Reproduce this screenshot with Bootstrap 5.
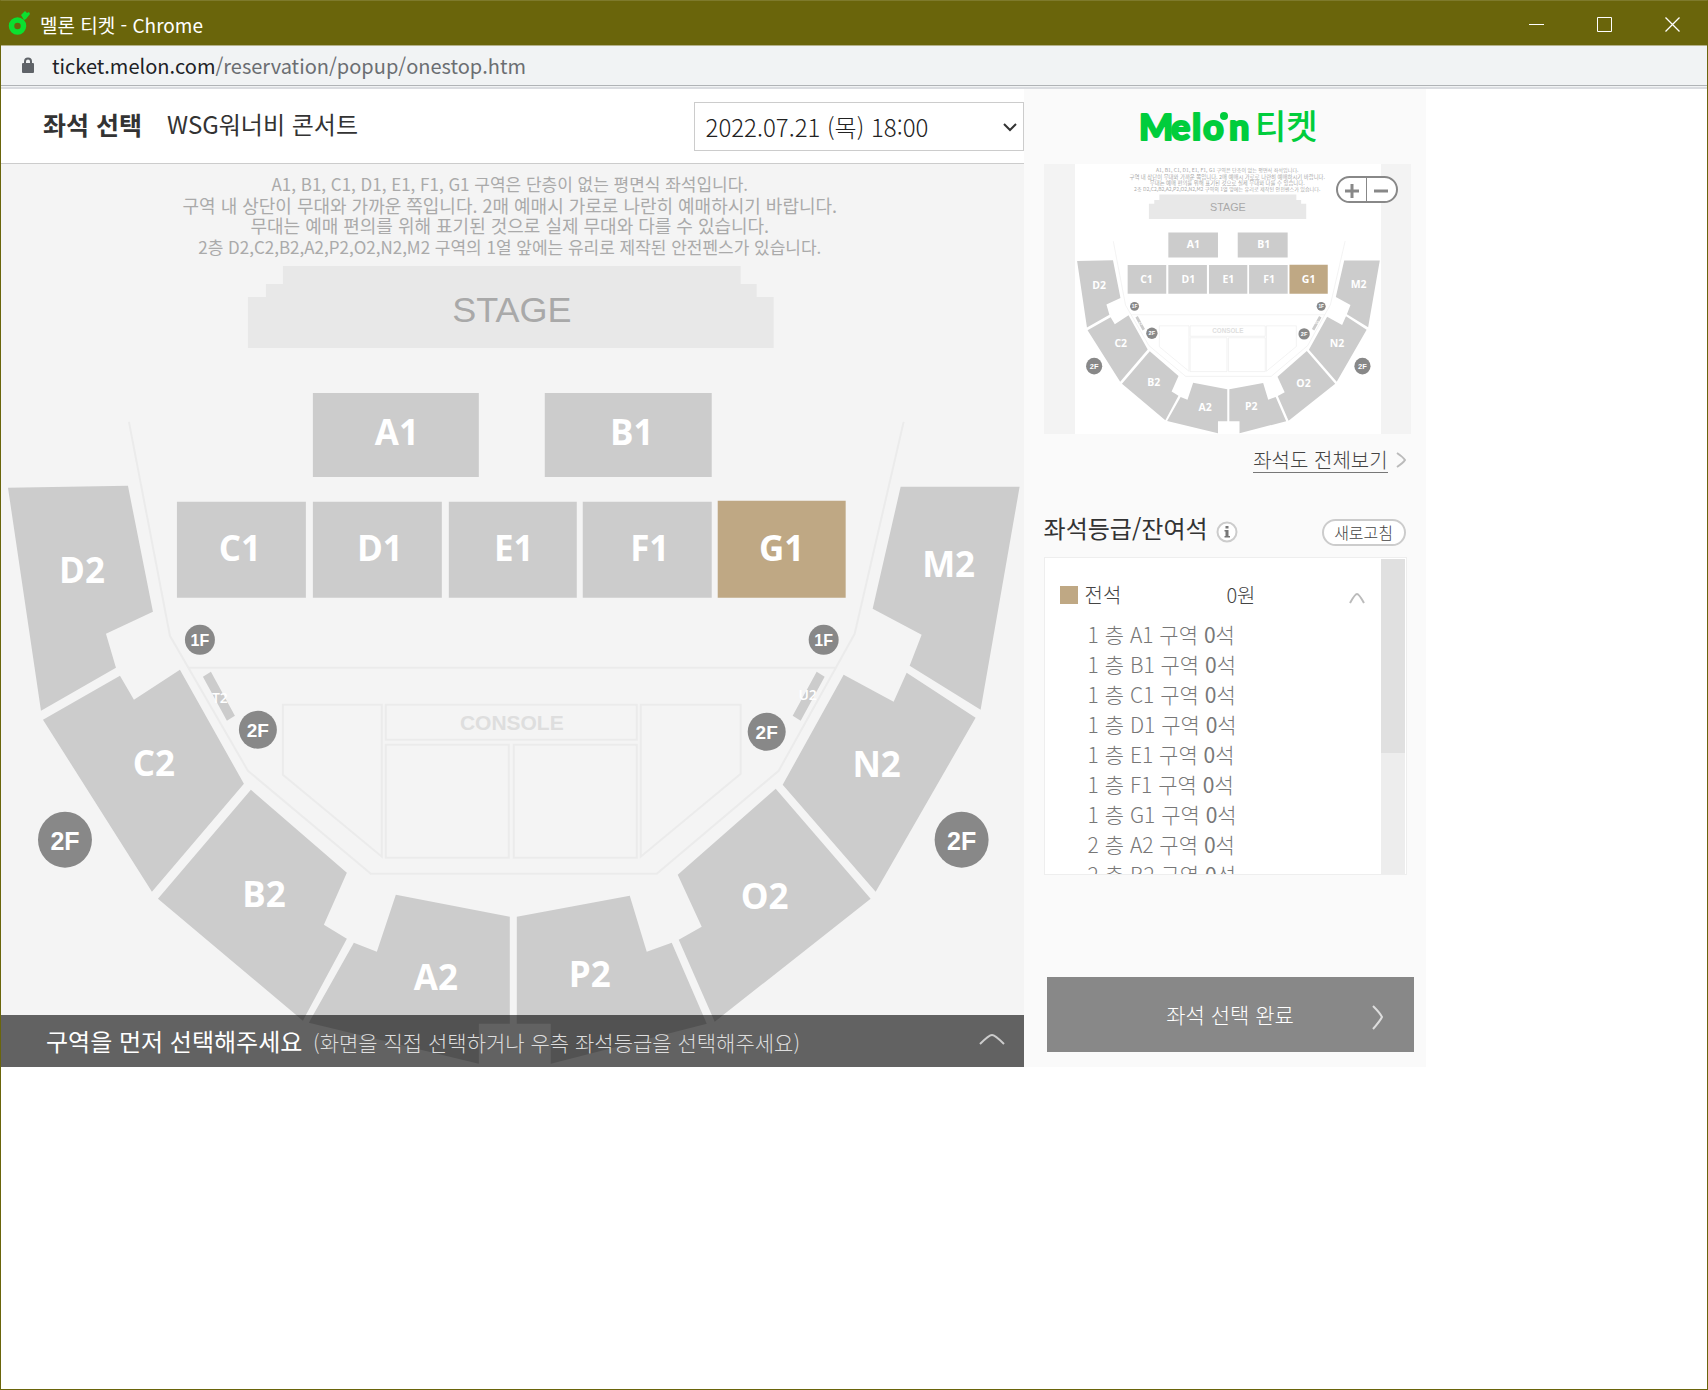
<!DOCTYPE html>
<html lang="ko">
<head>
<meta charset="utf-8">
<meta name="viewport" content="width=device-width, initial-scale=1">
<title>멜론 티켓</title>
<link href="https://cdn.jsdelivr.net/npm/bootstrap@5.3.0/dist/css/bootstrap.min.css" rel="stylesheet">
<style>
  body { font-family: "Noto Sans CJK KR", sans-serif; color: #333; background: #fff; }
  .win { min-height: 100vh; border: 1px solid #6a650b; border-top-color: #7e7a2c; }
  .titlebar { height: 44px; background: #6a650b; color: #fff; font-size: 19px; padding-left: 7px; }
  .win-btn { width: 68px; height: 44px; padding: 0 0 2px; border: 0; background: none; color: #fff; }
  .addressbar { height: 44px; background: #f1f3f4; border-top: 1px solid #b5b28a; padding-left: 20px; font-size: 20px; color: #6b6e72;
    box-shadow: inset 0 -2px #dadce0, inset 0 -3px #f1f3f4, inset 0 -4px #b0b3b6; padding-bottom: 4px; }
  .host { color: #202124; margin-left: 17px; }
  .seatcol { flex: 0 0 calc(60% - 1px); }
  .sidecol { flex: 0 0 402px; background: #fafafa; padding: 18px 11px 15px 20px; }
  .pagehead { height: 75px; border-bottom: 1px solid #ccc; padding-left: 42px; font-size: 24px; }
  .pagehead h1 { font-size: 25px; }
  .show-title { margin-left: 25px; }
  .show-select { width: 330px; height: 49px; border: 1px solid #ccc; border-radius: 0; font-size: 24px; font-weight: 300; padding: 0 30px 0 11px; color: #222;
    appearance: none; background: #fff; display: block; margin-top: 1px; }
  .select-arrow { right: 7px; top: 20px; pointer-events: none; }
  .map-area { background: #f4f4f4; }
  .map-area svg, .thumb svg { display: block; width: 100%; height: auto; }
  .zone { fill: #ccc; }
  .zone-on { fill: #bfa884; }
  .guide { fill: none; stroke: #ebebeb; stroke-width: 2; }
  .notice { font-size: 17px; fill: #aaa; text-anchor: middle; }
  .notice-wide { font-size: 18px; }
  .zone-name { font: 700 35px "Open Sans", sans-serif; fill: #fff; text-anchor: middle; }
  .stand-name { font: 600 14px "Open Sans", sans-serif; fill: #fff; text-anchor: middle; }
  .floor { fill: #888; }
  .floor-name { font: 700 25px "Liberation Sans", sans-serif; fill: #fff; text-anchor: middle; }
  .floor-md { font-size: 19px; }
  .floor-sm { font-size: 16px; }
  .guidebar { height: 52px; background: rgba(0,0,0,.6); color: #fff; font-size: 24px; padding: 0 18px 0 45px; }
  .guidebar .hint { font-size: 21px; font-weight: 300; color: #ddd; }
  .plain-btn { border: 0; background: none; padding: 0; line-height: 1; display: block; }
  .logo { overflow: visible; }
  .thumbbox { background: #f3f3f3; width: 367px; margin-top: 17px; padding-left: 31px; }
  .thumb { width: 306px; background: #fff; }
  .zoomer { top: 12px; right: 13px; width: 62px; height: 27px; border: 2px solid #888; border-radius: 14px; background: #fff; }
  .zoomer .plain-btn { flex: 1; }
  .zoomer .plain-btn + .plain-btn { border-left: 1px solid #888; }
  .wholeview { font-size: 20px; font-weight: 300; color: #444; text-decoration: none; border-bottom: 1px solid #777; line-height: 24px; }
  .wholerow { margin: 13px 9px 0 0; height: 26px; }
  .graderow { margin-top: 38px; width: 362px; height: 34px; }
  .graderow h2 { font-size: 24px; font-weight: 400; }
  .refresh { border: 2px solid #ccc; border-radius: 14px; background: #fff; width: 84px; height: 27px; font-size: 16px; font-weight: 300; padding: 0; line-height: 20px; color: #444; }
  .gradebox { width: 363px; height: 318px; margin-top: 12px; border: 1px solid #eee; background: #fff; padding: 1px 1px 0 15px; }
  .gradehead { padding-top: 12px; font-size: 20px; font-weight: 300; line-height: 30px; color: #444; height: 60px; }
  .swatch { width: 18px; height: 18px; background: #bfa884; margin-right: 7px; }
  .price { margin-left: 105px; }
  .zones { padding-left: 28px; font-size: 21px; font-weight: 300; line-height: 30px; color: #777; }
  .track { width: 24px; background: #ededed; }
  .track-thumb { height: 194px; background: #e0e0e0; }
  .done { margin: 102px 0 0 3px; width: 367px; height: 75px; border: 0; background: #888; color: #fff; font-size: 21px; font-weight: 300; }
  .done svg { right: 30px; top: 28px; }
</style>
</head>
<body>
<div class="win">
  <header class="titlebar d-flex align-items-center">
    <svg width="24" height="30" viewBox="0 0 24 30" aria-hidden="true"><circle cx="9.500" cy="18" r="6" fill="none" stroke="#0be02f" stroke-width="5.500"/><path d="M13 7l3-3 1-1 2 2 2-1 1 2-4 5-2 1z" fill="#0be02f"/></svg>
    <span class="ms-2 pt-1">멜론 티켓 - Chrome</span>
    <div class="ms-auto d-flex">
      <button class="win-btn" aria-label="최소화"><svg width="16" height="16"><path d="M0 7.500h15" stroke="#fff"/></svg></button>
      <button class="win-btn" aria-label="최대화"><svg width="16" height="16"><path d="M.5.5h14v14H.5z" fill="none" stroke="#fff"/></svg></button>
      <button class="win-btn" aria-label="닫기"><svg width="16" height="16"><path d="M.5.5l14 14M14.500.5l-14 14" stroke="#fff" stroke-width="1.300"/></svg></button>
    </div>
  </header>
  <div class="addressbar d-flex align-items-center">
    <svg width="14" height="17" viewBox="0 0 14 17" aria-hidden="true"><rect x="1" y="6" width="12" height="10" rx="1" fill="#5f6368"/><path d="M4 7V4.500a3 3 0 0 1 6 0V7" fill="none" stroke="#5f6368" stroke-width="2"/></svg>
    <span><span class="host">ticket.melon.com</span>/reservation/popup/onestop.htm</span>
  </div>

  <div class="d-flex align-items-stretch">
    <main class="seatcol">
      <div class="pagehead d-flex align-items-center">
        <h1 class="fw-bold mb-0 pb-1">좌석 선택</h1>
        <span class="show-title pb-1">WSG워너비 콘서트</span>
        <div class="position-relative ms-auto">
          <label for="show" class="visually-hidden">날짜</label>
          <select id="show" class="show-select"><option>2022.07.21 (목) 18:00</option></select>
          <svg class="select-arrow position-absolute" width="14" height="12" aria-hidden="true"><path d="M1 3l6 6 6-6" fill="none" stroke="#333" stroke-width="2"/></svg>
        </div>
      </div>

      <div class="map-area position-relative">
        <svg viewBox="1 164 1023 903" role="img" aria-label="좌석 배치도">
          <g id="hall">
            <g class="notice">
              <text x="510" y="191">A1, B1, C1, D1, E1, F1, G1 구역은 단층이 없는 평면식 좌석입니다.</text>
              <text class="notice-wide" x="510" y="213">구역 내 상단이 무대와 가까운 쪽입니다. 2매 예매시 가로로 나란히 예매하시기 바랍니다.</text>
              <text class="notice-wide" x="510" y="233">무대는 예매 편의를 위해 표기된 것으로 실제 무대와 다를 수 있습니다.</text>
              <text x="510" y="254">2층 D2,C2,B2,A2,P2,O2,N2,M2 구역의 1열 앞에는 유리로 제작된 안전펜스가 있습니다.</text>
            </g>
            <path d="M283 266H741V284H757V297H774V348H248V297H266V284H283Z" fill="#e8e8e8"/>
            <text x="512" y="322" font-family="Liberation Sans, sans-serif" font-size="36" fill="#a9a9a9" text-anchor="middle">STAGE</text>
            <g class="guide">
              <path d="M129 422L170 636L248 771L371 874H657L779 771L855 634L904 422M188 668H836"/>
              <path d="M283 705H382V857L283 775ZM386 705H637V740H386ZM386 745H509V858H386ZM514 745H637V858H514ZM641 705H741V774L641 857Z"/>
            </g>
            <text x="512" y="730" font-family="Liberation Sans, sans-serif" font-weight="700" font-size="21" fill="#dedede" text-anchor="middle">CONSOLE</text>
            <g class="zone">
              <path d="M313 393H479V477H313Z"/><path d="M545 393H712V477H545Z"/>
              <path d="M177 502H306V598H177Z"/><path d="M313 502H442V598H313Z"/><path d="M449 502H577V598H449Z"/><path d="M583 502H712V598H583Z"/>
              <path class="zone-on" d="M718 501H846V598H718Z"/>
              <path d="M8 488L128 486L153 612L106 634L116 668L41 711Z"/>
              <path d="M43 720L120 676L134 700L180 670L244 784L152 892Z"/>
              <path d="M251 790L347 873L324 925L347 939L303 1021L158 899Z"/>
              <path d="M354 943L377 952L396 895L510 917V1024H479V1064L309 1023Z"/>
              <path d="M517 917L630 896L647 952L672 943L707 1024L551 1064V1024H517Z"/>
              <path d="M776 789L871 899L715 1022L679 940L702 927L678 875Z"/>
              <path d="M844 675L894 702L907 673L976 718L876 892L783 785Z"/>
              <path d="M901 487H1020L981 710L910 666L922 635L873 609Z"/>
              <path d="M203 677L211 672L235 716L227 721ZM817 672L825 677L801 721L793 716Z"/>
            </g>
            <g class="zone-name">
              <text x="397" y="445">A1</text><text x="632" y="445">B1</text>
              <text x="240" y="561">C1</text><text x="380" y="561">D1</text><text x="514" y="561">E1</text><text x="650" y="561">F1</text><text x="782" y="561">G1</text>
              <text x="82" y="583">D2</text><text x="154" y="776">C2</text><text x="264" y="907">B2</text><text x="436" y="990">A2</text>
              <text x="590" y="987">P2</text><text x="765" y="909">O2</text><text x="877" y="777">N2</text><text x="949" y="577">M2</text>
            </g>
            <g class="stand-name"><text x="220" y="703">T2</text><text x="808" y="700">U2</text></g>
            <g class="floor">
              <circle cx="200" cy="640" r="15"/><circle cx="824" cy="640" r="15"/>
              <circle cx="258" cy="730" r="19"/><circle cx="767" cy="732" r="19"/>
              <ellipse cx="65" cy="840" rx="27" ry="28"/><ellipse cx="962" cy="840" rx="27" ry="28"/>
            </g>
            <g class="floor-name">
              <text class="floor-sm" x="200" y="646">1F</text><text class="floor-sm" x="824" y="646">1F</text>
              <text class="floor-md" x="258" y="737">2F</text><text class="floor-md" x="767" y="739">2F</text>
              <text x="65" y="850">2F</text><text x="962" y="850">2F</text>
            </g>
          </g>
        </svg>
        <div class="guidebar position-absolute bottom-0 start-0 end-0 d-flex align-items-center">
          <span>구역을 먼저 선택해주세요 <span class="hint ms-1">(화면을 직접 선택하거나 우측 좌석등급을 선택해주세요)</span></span>
          <button class="plain-btn ms-auto pb-1" aria-label="펼치기"><svg width="28" height="14"><path d="M2 12C7 7 11 3 14 3s7 4 12 9" fill="none" stroke="#ccc" stroke-width="2"/></svg></button>
        </div>
      </div>
    </main>

    <aside class="sidecol">
      <a href="#" class="d-flex justify-content-center" aria-label="Melon 티켓"><svg class="logo" width="180" height="40" viewBox="0 0 180 40" fill="#00cd3c">
        <text x="0 32 53 64 90" y="33" font-family="Lato, sans-serif" font-weight="900" font-size="36" stroke="#00cd3c" stroke-width="2" stroke-linejoin="round">Melon</text>
        <circle cx="85" cy="9" r="4"/>
        <text x="116" y="32" font-size="34" font-weight="500">티켓</text>
      </svg></a>
      <div class="thumbbox position-relative">
        <div class="thumb"><svg viewBox="1 164 1023 903" aria-hidden="true"><use href="#hall"/></svg></div>
        <div class="zoomer position-absolute d-flex align-items-stretch">
          <button class="plain-btn" aria-label="확대"><svg width="16" height="16"><path d="M1 8h14M8 1v14" stroke="#888" stroke-width="3"/></svg></button>
          <button class="plain-btn" aria-label="축소"><svg width="16" height="16"><path d="M1 8h14" stroke="#888" stroke-width="3"/></svg></button>
        </div>
      </div>
      <div class="wholerow d-flex justify-content-end align-items-center">
        <a href="#" class="wholeview">좌석도 전체보기</a>
        <svg class="ms-2" width="10" height="16" aria-hidden="true"><path d="M1 1q6 4 8 7q-2 3-8 7" fill="none" stroke="#bbb" stroke-width="2"/></svg>
      </div>
      <div class="graderow d-flex align-items-center">
        <h2 class="mb-0">좌석등급/잔여석</h2>
        <button class="plain-btn ms-2 pt-2" aria-label="안내"><svg width="22" height="22"><circle cx="11" cy="11" r="9.500" fill="#fff" stroke="#ccc" stroke-width="2"/><path d="M9.500 5h3v2.500h-3zM8.500 9h4v6H14v1.500H8.500V15h1v-4.500h-1z" fill="#777"/></svg></button>
        <button class="refresh ms-auto mt-2">새로고침</button>
      </div>
      <div class="gradebox d-flex">
        <div class="flex-grow-1 overflow-hidden">
          <div class="gradehead d-flex align-items-center pe-3">
            <span class="swatch"></span><span>전석</span><span class="price">0원</span>
            <button class="plain-btn ms-auto" aria-label="접기"><svg width="16" height="12"><path d="M1 11Q6 2 8 2t7 9" fill="none" stroke="#bbb" stroke-width="2"/></svg></button>
          </div>
          <ul class="zones list-unstyled mb-0">
            <li>1 층 A1 구역 <b>0</b>석</li><li>1 층 B1 구역 <b>0</b>석</li><li>1 층 C1 구역 <b>0</b>석</li>
            <li>1 층 D1 구역 <b>0</b>석</li><li>1 층 E1 구역 <b>0</b>석</li><li>1 층 F1 구역 <b>0</b>석</li>
            <li>1 층 G1 구역 <b>0</b>석</li><li>2 층 A2 구역 <b>0</b>석</li><li>2 층 B2 구역 <b>0</b>석</li>
          </ul>
        </div>
        <div class="track"><div class="track-thumb"></div></div>
      </div>
      <button class="done position-relative">좌석 선택 완료<svg class="position-absolute" width="12" height="25"><path d="M1 1Q8 8 10 12Q8 16 1 24" fill="none" stroke="#ddd" stroke-width="2"/></svg></button>
    </aside>
  </div>
</div>
<script src="https://cdn.jsdelivr.net/npm/bootstrap@5.3.0/dist/js/bootstrap.bundle.min.js"></script>
</body>
</html>
